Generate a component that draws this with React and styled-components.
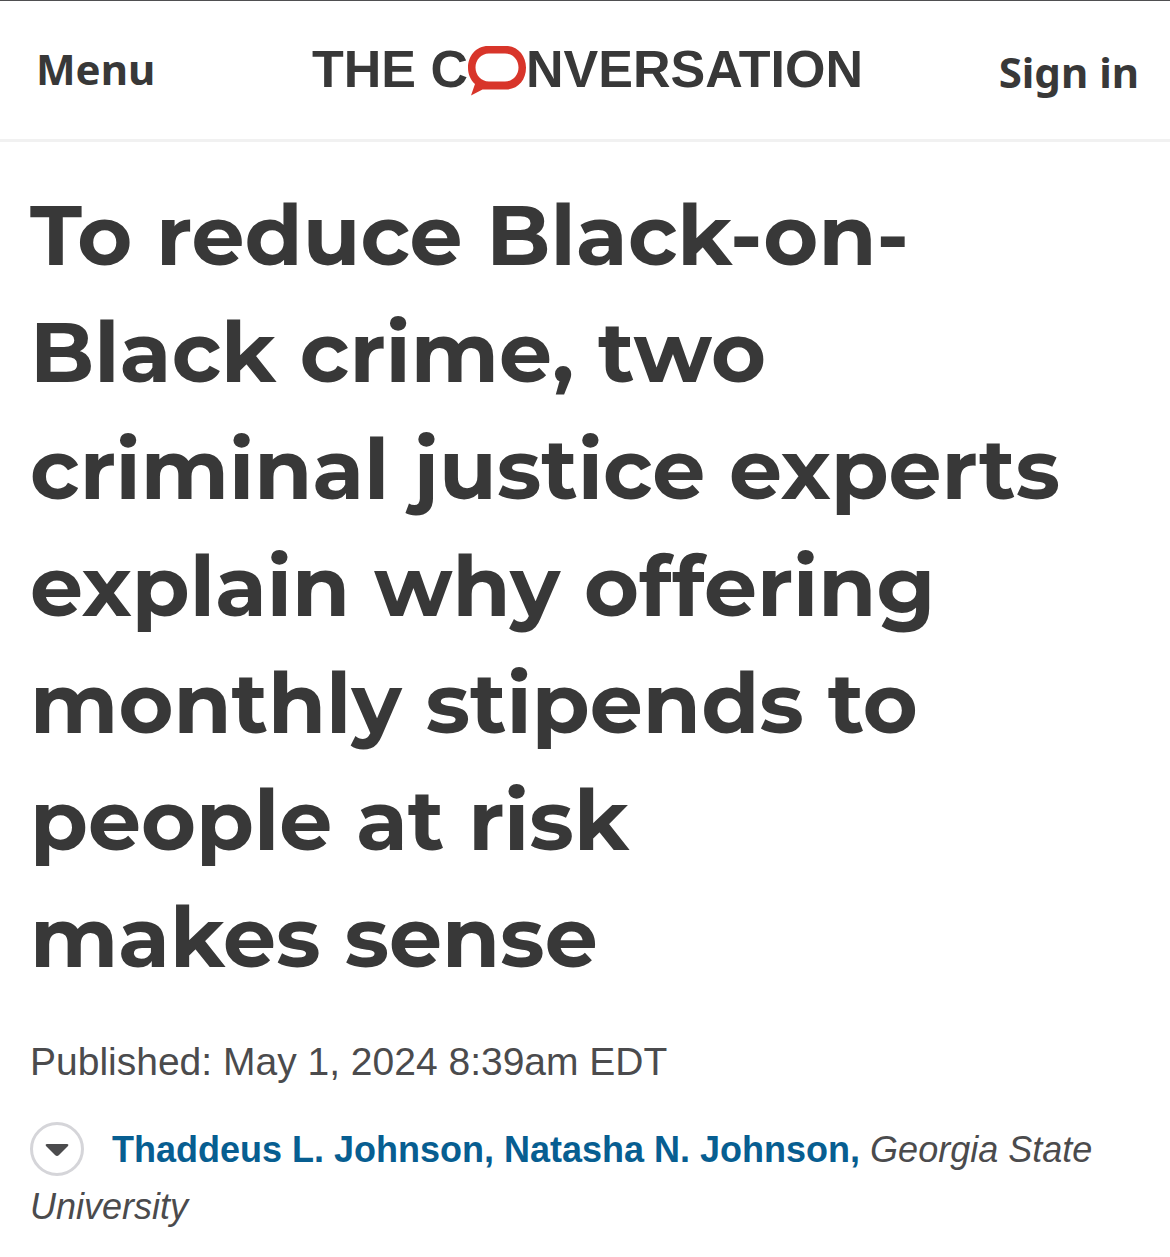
import React, { useState } from "react";
import styled, { createGlobalStyle } from "styled-components";

const GlobalStyle = createGlobalStyle`
  *, *::before, *::after { box-sizing: border-box; }
  body {
    margin: 0;
    background: #fff;
    color: #383838;
    font-family: "Liberation Sans", Helvetica, Arial, sans-serif;
  }
`;

const Page = styled.div`
  border-top: 1px solid #4f4f51;
`;

const Header = styled.header`
  display: grid;
  grid-template-columns: 1fr auto 1fr;
  align-items: start;
  padding: 38px 31px 38px 36px;
  border-bottom: 3px solid #f1f1f1;
`;

const NavButton = styled.button`
  justify-self: ${({ $end }) => ($end ? "end" : "start")};
  margin: ${({ $end }) => ($end ? "3px 0 0" : "0")};
  padding: 0;
  border: 0;
  background: none;
  color: inherit;
  font: 700 42px/59px "Noto Sans", sans-serif;
  cursor: pointer;
`;

const Logo = styled.a`
  display: flex;
  align-items: flex-start;
  color: inherit;
  font-size: 52px;
  font-weight: 700;
  line-height: 60px;
  text-decoration: none;
`;

const Bubble = styled.svg`
  display: block;
  width: 58px;
  height: 50px;
  margin-top: 7px;
`;

const Article = styled.main`
  padding: 35px 30px 20px;
`;

const Title = styled.h1`
  margin: 0;
  font: 700 84px/117px Montserrat, Inter, sans-serif;
`;

const Published = styled.p`
  margin: 42px 0 0;
  color: #4b4b4d;
  font-size: 39px;
  line-height: 48px;
`;

const Byline = styled.p`
  margin: 35px 0 0;
  color: #4b4b4d;
  font-size: 36px;
  line-height: 57px;
`;

const Toggle = styled.button`
  display: inline-flex;
  align-items: center;
  justify-content: center;
  width: 54px;
  height: 54px;
  margin-right: 28px;
  padding: 3px 0 0;
  border: 3px solid #d5d5d9;
  border-radius: 50%;
  background: #fff;
  color: #4b4b4d;
  vertical-align: 5px;
  cursor: pointer;
`;

const AuthorLink = styled.a`
  color: #075e91;
  font-weight: 700;
  text-decoration: none;
`;

const TITLE =
  "To reduce Black-on-Black crime, two criminal justice experts explain why offering monthly stipends to people at risk makes\u00a0sense";

export default function App() {
  const [open, setOpen] = useState(false);

  return (
    <Page>
      <GlobalStyle />
      <Header>
        <NavButton type="button">Menu</NavButton>
        <Logo href="#" aria-label="The Conversation">
          <span>THE C</span>
          <Bubble viewBox="0 0 58 50" aria-hidden="true">
            <path
              fill="#d8352a"
              fillRule="evenodd"
              d="M20 0H38C50 0 58 10 58 21.800C58 34 50 43.500 38 43.500H14.500L3 49.500L7 38C2.500 34 0 28.500 0 21.800C0 10 8 0 20 0ZM21 7.500C13 7.500 7.500 14 7.500 21.500C7.500 29 13 35.500 21 35.500H37C45 35.500 50.500 29 50.500 21.500C50.500 14 45 7.500 37 7.500Z"
            />
          </Bubble>
          <span>NVERSATION</span>
        </Logo>
        <NavButton type="button" $end>
          Sign in
        </NavButton>
      </Header>
      <Article>
        <Title>{TITLE}</Title>
        <Published>
          Published: <time dateTime="2024-05-01T08:39-04:00">May 1, 2024 8:39am EDT</time>
        </Published>
        <Byline>
          <Toggle
            type="button"
            aria-label="Author details"
            aria-expanded={open}
            onClick={() => setOpen(!open)}
          >
            <svg width="24" height="14" viewBox="0 0 24 14" aria-hidden="true">
              <path
                d="M2 1H22Q24 1 23 3L14 12Q12 14 10 12L1 3Q0 1 2 1Z"
                fill="currentColor"
              />
            </svg>
          </Toggle>
          <AuthorLink href="#">Thaddeus L. Johnson,</AuthorLink>{" "}
          <AuthorLink href="#">Natasha N. Johnson,</AuthorLink>{" "}
          <em>Georgia State University</em>
        </Byline>
      </Article>
    </Page>
  );
}
